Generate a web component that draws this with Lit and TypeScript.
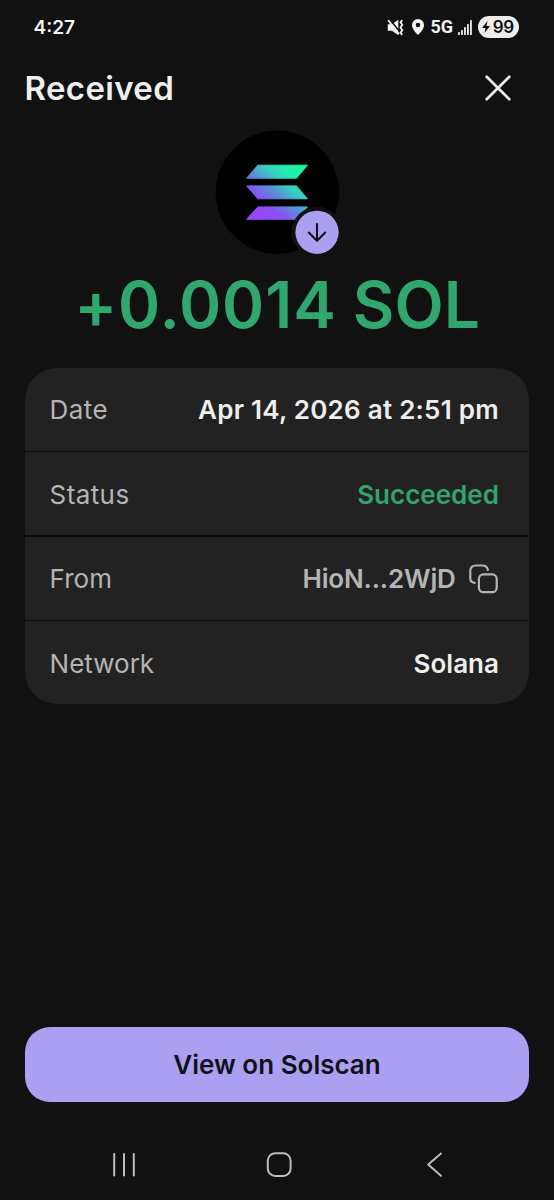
import { LitElement, html, svg, css } from "lit";
import { customElement } from "lit/decorators.js";

@customElement("status-bar")
class StatusBar extends LitElement {
  static styles = css`
    :host { display: flex; align-items: center; justify-content: space-between; height: 54px; padding: 0 35.5px 0 33.5px; box-sizing: border-box; color: #f3f3f3; }
    .time { font-size: 19px; font-weight: 600; }
    .icons { display: flex; align-items: center; }
    .mute { margin-right: 8px; }
    .pin { margin-right: 6px; }
    .net { font: 700 18px Roboto, sans-serif; margin: -1px 4.500px 0 0; }
    .signal { margin-right: 6px; }
    .battery { display: flex; align-items: center; justify-content: center; gap: 2.500px; width: 41px; height: 22px; border-radius: 11px; background: #ededed; color: #111; font: 600 17px Inter, sans-serif; letter-spacing: -0.300px; }
    svg { display: block; }
  `;
  render() {
    return html`
      <span class="time">4:27</span>
      <div class="icons">
        <svg class="mute" width="17" height="17" viewBox="0 0 17 17">
          <path d="M.8 5.3h4.200L11.300 .8v15.400l-6.300-4.500H.8z" fill="#f3f3f3"/>
          <path d="M3.200 .8 13 13.200" stroke="#111" stroke-width="1.500"/>
          <path d="M1.200 1.200 12 15" stroke="#f3f3f3" stroke-width="1.800"/>
          <path d="M15.300 1.200l-1.800 2 1.800 2.600-1.800 2.700 1.800 2.700-1.800 2.600 1.800 2" fill="none" stroke="#f3f3f3" stroke-width="1.800"/>
        </svg>
        <svg class="pin" width="12" height="16" viewBox="0 0 12 16">
          <path fill-rule="evenodd" fill="#f3f3f3" d="M6 0a6 6 0 0 1 6 6c0 3.700-3.500 7.500-6 10C3.500 13.500 0 9.700 0 6a6 6 0 0 1 6-6zM6 3.700a2.300 2.300 0 1 0 0 4.600a2.300 2.300 0 0 0 0-4.600z"/>
        </svg>
        <span class="net">5G</span>
        <svg class="signal" width="14" height="15" viewBox="0 0 14 15">
          ${[3, 5, 8, 11, 15].map((h, i) => svg`<rect x=${i * 3} y=${15 - h} width="1.900" height=${h} rx=".6" fill="#e4e4e4"/>`)}
        </svg>
        <div class="battery">
          <svg width="8" height="12" viewBox="0 0 8 12"><path d="M5.500 0 0 7h3.500L2.500 12 8 5H4.500z" fill="#111"/></svg>
          <span>99</span>
        </div>
      </div>
    `;
  }
}

@customElement("detail-row")
class DetailRow extends LitElement {
  static properties = { label: {} };
  declare label: string;
  static styles = css`
    :host { display: flex; align-items: center; justify-content: space-between; background: #222; padding: 1px 30.500px 0 25px; font-size: 26px; }
    .label { color: #b4b4b4; letter-spacing: var(--label-spacing, 0); }
    .value { display: flex; align-items: center; font-weight: 600; }
  `;
  render() {
    return html`<span class="label">${this.label}</span><span class="value"><slot></slot></span>`;
  }
}

@customElement("app-root")
class AppRoot extends LitElement {
  static styles = css`
    :host { display: flex; flex-direction: column; height: 1200px; box-sizing: border-box; background: #111; color: #eee; font-family: Inter, sans-serif; overflow: hidden; }
    svg { display: block; }
    header { display: flex; align-items: center; justify-content: space-between; height: 68px; padding: 0 42.800px 0 24.500px; }
    h1 { margin: 0; font-size: 33px; line-height: 40px; font-weight: 600; letter-spacing: 0.350px; }
    .token { align-self: center; margin-top: 4px; }
    .amount { margin-top: 7px; height: 80px; line-height: 80px; text-align: center; font-size: 64px; font-weight: 600; color: #2fa76f; white-space: nowrap; }
    .number { letter-spacing: 0.900px; }
    .card { display: grid; grid-template-rows: repeat(4, 1fr); gap: 1.500px; margin: 22.500px 24.600px 0; height: 336.700px; border-radius: 32px; overflow: hidden; background: #0b0b0b; }
    .loose { --label-spacing: 0.400px; }
    .date { letter-spacing: 0.250px; }
    .green { color: #30a46c; }
    .address { color: #b4b4b4; letter-spacing: -0.150px; }
    .copy { margin: 0 1px 0 13.200px; }
    button { margin: auto 24.700px 0; height: 74.300px; border: 0; border-radius: 25px; background: #ab9ff2; color: #111118; font: 600 26px Inter, sans-serif; flex: none; padding: 1px 0 0; }
    nav { display: grid; flex: none; height: 98.400px; }
  `;
  render() {
    return html`
      <status-bar></status-bar>
      <header>
        <h1>Received</h1>
        <svg width="26" height="26" viewBox="0 0 26 26"><path d="M1.700 1.700 24.300 24.300M24.300 1.700 1.700 24.300" stroke="#eee" stroke-width="2.700" stroke-linecap="round"/></svg>
      </header>
      <svg class="token" width="132" height="132" viewBox="211 126 132 132">
        <defs>
          <linearGradient id="sol" gradientUnits="userSpaceOnUse" x1="252" y1="222" x2="302" y2="162">
            <stop offset=".08" stop-color="#9945ff"/><stop offset=".3" stop-color="#8752f3"/><stop offset=".5" stop-color="#5497d5"/><stop offset=".65" stop-color="#35cfc0"/><stop offset=".8" stop-color="#22eeb0"/><stop offset="1" stop-color="#19fb9b"/>
          </linearGradient>
        </defs>
        <circle cx="277.200" cy="192.200" r="61.600" fill="#000"/>
        <g fill="url(#sol)" stroke="url(#sol)" stroke-width="1" stroke-linejoin="round">
          <path d="M257.800 165.200H307.400L296.500 178.200H246.600z"/>
          <path d="M246.600 185.900H296.500L307.400 198.800H257.800z"/>
          <path d="M257.800 206.900H307.400L296.500 219.300H246.600z"/>
        </g>
        <circle cx="317" cy="232.300" r="25.500" fill="#111"/>
        <circle cx="317" cy="232.300" r="21.600" fill="#ab9ff2"/>
        <path d="M317 224V240.500M308.800 232.500 317 240.700 325.200 232.500" fill="none" stroke="#111118" stroke-width="2" stroke-linecap="round" stroke-linejoin="round"/>
      </svg>
      <div class="amount"><span class="number">+0.0014</span> SOL</div>
      <section class="card">
        <detail-row class="loose" label="Date"><span class="date">Apr 14, 2026 at 2:51 pm</span></detail-row>
        <detail-row class="loose" label="Status"><span class="green">Succeeded</span></detail-row>
        <detail-row label="From">
          <span class="address">HioN...2WjD</span>
          <svg class="copy" width="29" height="30" viewBox="0 0 29 30" fill="none" stroke="#b4b4b4" stroke-width="2.200" stroke-linecap="round">
            <rect x="9.900" y="10.400" width="17.800" height="17.800" rx="4.500"/>
            <path d="M5.700 18.900C3 18.500 1.300 17 1.300 14.500V6.600C1.300 3.500 3.500 1.500 6.600 1.500H13.500C16.500 1.500 18.300 3 18.900 6"/>
          </svg>
        </detail-row>
        <detail-row label="Network">Solana</detail-row>
      </section>
      <button>View on Solscan</button>
      <nav>
        <svg width="554" height="98" viewBox="0 1102 554 98" fill="none" stroke="#bdbdbd" stroke-width="2" stroke-linecap="round" stroke-linejoin="round">
          <path d="M114.200 1154V1175.500M124 1154V1175.500M133.800 1154V1175.500"/>
          <rect x="267.800" y="1153.200" width="22.800" height="22.800" rx="7.500"/>
          <path d="M441 1153.500 428.200 1164.500 441 1175.800"/>
        </svg>
      </nav>
    `;
  }
}
